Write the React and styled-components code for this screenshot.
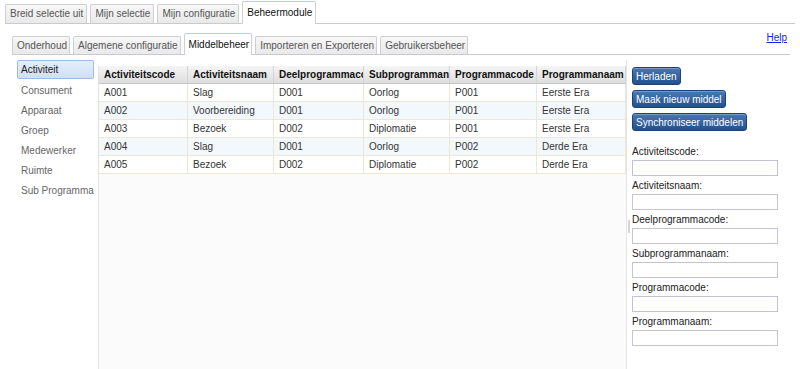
import React from 'react';
import styled, { createGlobalStyle } from 'styled-components';

const GlobalStyle = createGlobalStyle`
  html, body {
    margin: 0;
    padding: 0;
    background: #fff;
    font-family: "Liberation Sans", Arial, sans-serif;
    font-size: 10px;
    color: #333;
  }
  #root {
    height: 100vh;
  }
`;

const topTabs = ['Breid selectie uit', 'Mijn selectie', 'Mijn configuratie', 'Beheermodule'];
const subTabs = ['Onderhoud', 'Algemene configuratie', 'Middelbeheer', 'Importeren en Exporteren', 'Gebruikersbeheer'];
const navItems = ['Activiteit', 'Consument', 'Apparaat', 'Groep', 'Medewerker', 'Ruimte', 'Sub Programma'];

const columns = [
    { title: 'Activiteitscode', width: 89 },
    { title: 'Activiteitsnaam', width: 86 },
    { title: 'Deelprogrammacode', width: 90 },
    { title: 'Subprogrammanaam', width: 86 },
    { title: 'Programmacode', width: 87 },
    { title: 'Programmanaam', width: 89 },
];

const rows = [
    ['A001', 'Slag', 'D001', 'Oorlog', 'P001', 'Eerste Era'],
    ['A002', 'Voorbereiding', 'D001', 'Oorlog', 'P001', 'Eerste Era'],
    ['A003', 'Bezoek', 'D002', 'Diplomatie', 'P001', 'Eerste Era'],
    ['A004', 'Slag', 'D001', 'Oorlog', 'P002', 'Derde Era'],
    ['A005', 'Bezoek', 'D002', 'Diplomatie', 'P002', 'Derde Era'],
];

const fields = ['Activiteitscode:', 'Activiteitsnaam:', 'Deelprogrammacode:', 'Subprogrammanaam:', 'Programmacode:', 'Programmanaam:'];

const App = () => {
    return (
        <Page>
            <GlobalStyle />
            {/* main module tabs */}
            <TopTabBar>
                {topTabs.map((t) => (
                    <TopTab key={t} $active={t === 'Beheermodule'}>{t}</TopTab>
                ))}
            </TopTabBar>

            {/* sub tabs with help link */}
            <SubTabBar>
                <SubTabs>
                    {subTabs.map((t) => (
                        <SubTab key={t} $active={t === 'Middelbeheer'}>{t}</SubTab>
                    ))}
                </SubTabs>
                <HelpLink href="#">Help</HelpLink>
            </SubTabBar>

            <Main>
                <Nav>
                    {navItems.map((n) => (
                        <NavItem key={n} $selected={n === 'Activiteit'}>{n}</NavItem>
                    ))}
                </Nav>

                <GridPanel>
                    <HeaderRow>
                        {columns.map((c) => (
                            <HeaderCell key={c.title} $w={c.width}>{c.title}</HeaderCell>
                        ))}
                    </HeaderRow>
                    {rows.map((r, i) => (
                        <Row key={r[0]} $alt={i % 2 === 1}>
                            {r.map((v, j) => (
                                <Cell key={j} $w={columns[j].width}>{v}</Cell>
                            ))}
                        </Row>
                    ))}
                </GridPanel>

                <Splitter>
                    <Grip />
                </Splitter>

                <Side>
                    <Buttons>
                        <ActionButton>Herladen</ActionButton>
                        <ActionButton>Maak nieuw middel</ActionButton>
                        <ActionButton>Synchroniseer middelen</ActionButton>
                    </Buttons>
                    <Form>
                        {fields.map((f) => (
                            <Field key={f}>
                                <Label>{f}</Label>
                                <Input type="text" />
                            </Field>
                        ))}
                    </Form>
                </Side>
            </Main>
        </Page>
    );
};

export default App;

// page wrapper
const Page = styled.div`
    height: 100%;
    display: flex;
    flex-direction: column;
    overflow: hidden;
`;

// top tab strip
const TopTabBar = styled.div`
    display: flex;
    align-items: flex-end;
    gap: 3px;
    height: 23px;
    margin: 0 5px;
    border-bottom: 1px solid #c9c9d3;
`;

const TopTab = styled.div`
    height: ${(p) => (p.$active ? '22px' : '18px')};
    line-height: ${(p) => (p.$active ? '22px' : '18px')};
    padding: 0 3px 0 4px;
    margin-bottom: ${(p) => (p.$active ? '-1px' : '0')};
    border: 1px solid #cfcfcf;
    border-bottom: none;
    border-radius: 2px 2px 0 0;
    background: ${(p) => (p.$active ? '#fff' : 'linear-gradient(#f7f7f7, #e9e9e9)')};
    color: ${(p) => (p.$active ? '#111' : '#555')};
    white-space: nowrap;
    ${(p) => p.$active && 'border-top-color: #b9cde6;'}
`;

// second level tab strip
const SubTabBar = styled.div`
    display: flex;
    align-items: flex-end;
    justify-content: space-between;
    height: 23px;
    margin: 7px 10px 0 12px;
    border-bottom: 1px solid #c9c9d3;
`;

const SubTabs = styled.div`
    display: flex;
    align-items: flex-end;
    gap: 3px;
`;

const SubTab = styled(TopTab)`
    height: ${(p) => (p.$active ? '21px' : '17px')};
    line-height: ${(p) => (p.$active ? '21px' : '17px')};
    padding: 0 2px 0 4px;
`;

const HelpLink = styled.a`
    align-self: flex-start;
    margin-top: 1px;
    margin-right: 3px;
    color: #1a1aee;
    font-size: 10px;
    text-decoration: underline;
`;

// main area
const Main = styled.div`
    flex: 1;
    display: flex;
    margin-top: 5px;
    min-height: 0;
`;

const Nav = styled.div`
    width: 81px;
    padding-left: 17px;
    display: flex;
    flex-direction: column;
`;

const NavItem = styled.div`
    box-sizing: border-box;
    height: ${(p) => (p.$selected ? '19px' : '20px')};
    line-height: ${(p) => (p.$selected ? '17px' : '20px')};
    padding-left: 3px;
    margin-right: 4px;
    margin-bottom: ${(p) => (p.$selected ? '1px' : '0')};
    border: ${(p) => (p.$selected ? '1px solid #9fbde3' : '1px solid transparent')};
    border-radius: 2px;
    background: ${(p) => (p.$selected ? 'linear-gradient(#e3eefb, #cfe0f5)' : 'transparent')};
    color: ${(p) => (p.$selected ? '#222' : '#666')};
    white-space: nowrap;
`;

const GridPanel = styled.div`
    width: 527px;
    margin-top: 6px;
    border-left: 1px solid #e2e2e2;
    background: #fbfbfb;
    overflow: hidden;
`;

const HeaderRow = styled.div`
    display: flex;
    height: 17px;
    background: linear-gradient(#f5f5f5, #dedede);
    border-bottom: 1px solid #c6c6c6;
`;

const HeaderCell = styled.div`
    flex: 0 0 ${(p) => p.$w}px;
    box-sizing: border-box;
    padding-left: 5px;
    line-height: 17px;
    font-weight: bold;
    color: #111;
    white-space: nowrap;
    overflow: hidden;
    text-overflow: clip;
    border-right: 1px solid #d4d4d4;
`;

const Row = styled.div`
    display: flex;
    height: 17px;
    background: ${(p) => (p.$alt ? '#f3f8fd' : '#fff')};
    border-bottom: 1px solid #efe7d6;
`;

const Cell = styled.div`
    flex: 0 0 ${(p) => p.$w}px;
    box-sizing: border-box;
    padding-left: 5px;
    line-height: 17px;
    color: #333;
    white-space: nowrap;
    overflow: hidden;
    border-right: 1px solid #efe7d6;
`;

// splitter between grid and form
const Splitter = styled.div`
    position: relative;
    width: 5px;
    border-left: 1px solid #e4e4e4;
`;

const Grip = styled.div`
    position: absolute;
    left: 1px;
    top: 160px;
    width: 2px;
    height: 13px;
    background: #d6d6d6;
`;

// right side form
const Side = styled.div`
    display: flex;
    flex-direction: column;
    padding-top: 7px;
`;

const Buttons = styled.div`
    display: flex;
    flex-direction: column;
    align-items: flex-start;
    gap: 5px;
`;

const ActionButton = styled.button`
    height: 18px;
    padding: 0 3px;
    border: 1px solid #1d4278;
    border-radius: 3px;
    background: linear-gradient(#4a78b4, #23508f);
    box-shadow: inset 0 1px 0 rgba(255, 255, 255, 0.25);
    color: #fff;
    font-family: "Liberation Sans", Arial, sans-serif;
    font-size: 10px;
    cursor: pointer;
`;

const Form = styled.div`
    margin-top: 13px;
    display: flex;
    flex-direction: column;
    gap: 2px;
`;

const Field = styled.div`
    display: flex;
    flex-direction: column;
`;

const Label = styled.label`
    height: 16px;
    line-height: 16px;
    color: #222;
`;

const Input = styled.input`
    width: 146px;
    height: 16px;
    box-sizing: border-box;
    margin: 0;
    border: 1px solid #c3c3d3;
    background: #fff;
    padding: 0 2px;
    font-size: 10px;
`;
